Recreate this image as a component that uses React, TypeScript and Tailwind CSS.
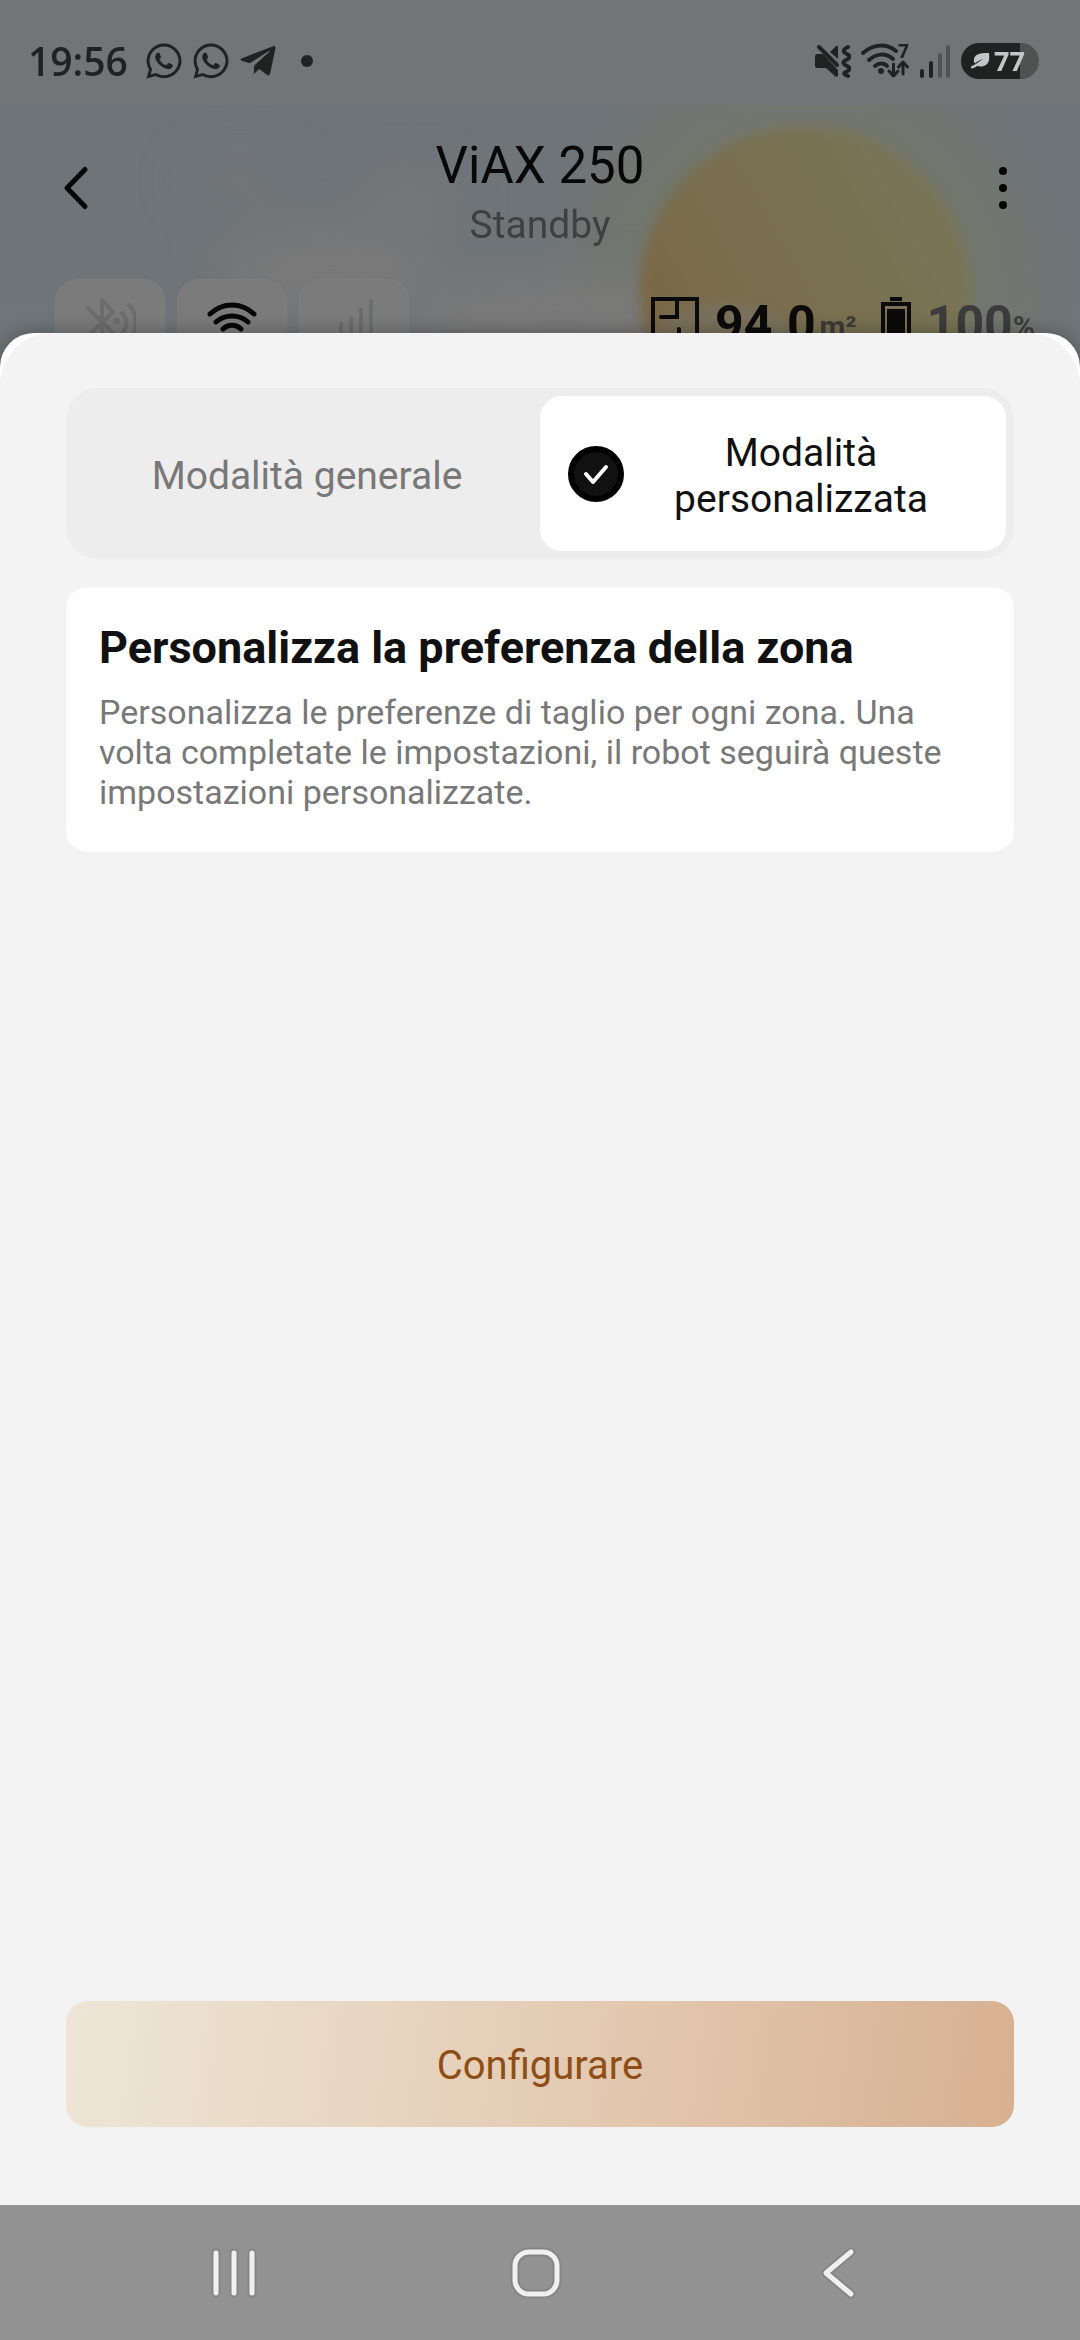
import type { ReactNode } from "react"
import { FaTelegramPlane, FaWhatsapp } from "react-icons/fa"

export default function App() {
  return (
    <div className="flex min-h-screen flex-col bg-[#f3f3f3] font-['Roboto',sans-serif]">
      <header className="relative overflow-hidden bg-[#70757a] pb-2">
        <Sky />
        <div className="relative">
          <StatusBar />
          <AppBar />
          <DeviceStats />
        </div>
      </header>

      <div className="relative -mt-10 flex flex-1 flex-col rounded-t-[34px] bg-white shadow-[0_0_20px_rgba(0,0,0,0.3)]">
        <main className="flex flex-1 flex-col rounded-t-[52px] bg-[#f3f3f3] px-[66px] pt-[55px] pb-[78px]">
          <ModeSwitch />
          <section className="mt-7 rounded-[22px] bg-white px-[33px] pt-[33px] pb-10">
            <h2 className="text-[45px] leading-[56px] font-bold text-[#111]">
              Personalizza la preferenza della zona
            </h2>
            <p className="mt-4 text-[34px] leading-[40px] text-[#787878]">
              Personalizza le preferenze di taglio per ogni zona. Una volta
              completate le impostazioni, il robot seguirà queste impostazioni
              personalizzate.
            </p>
          </section>
          <button
            type="button"
            className="mt-auto h-[126px] rounded-[22px] bg-[linear-gradient(98deg,#ede6d6_0%,#e5cfb8_46%,#d8b091_100%)] pt-1 text-[40px] leading-[46px] text-[#8f4e17]"
          >
            Configurare
          </button>
        </main>
      </div>

      <NavBar />
    </div>
  )
}

/** Dimmed sky with the sun and a few soft clouds */
function Sky() {
  return (
    <svg
      className="absolute inset-0 size-full"
      viewBox="0 0 1080 373"
      preserveAspectRatio="xMidYMin slice"
      aria-hidden="true"
    >
      <defs>
        <linearGradient id="sky" x1="0" y1="0" x2="0" y2="1">
          <stop offset="0" stopColor="#6e7378" />
          <stop offset="1" stopColor="#6f7578" />
        </linearGradient>
        <linearGradient id="sun" x1="0" y1="0.7" x2="0.9" y2="0.2">
          <stop offset="0" stopColor="#7b6643" />
          <stop offset="0.4" stopColor="#796e4d" />
          <stop offset="1" stopColor="#787556" />
        </linearGradient>
        <radialGradient id="halo">
          <stop offset="0.5" stopColor="#747769" />
          <stop offset="1" stopColor="#747769" stopOpacity="0" />
        </radialGradient>
        <filter
          id="soft"
          x="-50%"
          y="-50%"
          width="200%"
          height="200%"
          colorInterpolationFilters="sRGB"
        >
          <feGaussianBlur stdDeviation="24" />
        </filter>
        <filter id="edge" colorInterpolationFilters="sRGB">
          <feGaussianBlur stdDeviation="6" />
        </filter>
      </defs>
      <rect width="1080" height="373" fill="url(#sky)" />
      <circle cx="805" cy="290" r="270" fill="url(#halo)" />
      <g filter="url(#soft)" fill="#7a7979">
        <ellipse cx="330" cy="270" rx="110" ry="40" />
        <ellipse cx="410" cy="200" rx="50" ry="25" opacity="0.7" />
        <ellipse cx="560" cy="320" rx="150" ry="45" />
        <ellipse cx="240" cy="180" rx="60" ry="20" opacity="0.3" />
      </g>
      <circle cx="805" cy="292" r="165" fill="url(#sun)" filter="url(#edge)" />
      <g filter="url(#edge)" fill="#797468">
        <ellipse cx="725" cy="345" rx="75" ry="42" opacity="0.6" />
      </g>
      <rect width="1080" height="105" fill="#737476" />
    </svg>
  )
}

function StatusBar() {
  return (
    <div className="flex h-[106px] items-center pt-4 pr-[41px] pl-7 text-[#202222]">
      <time className="font-['Open_Sans',sans-serif] text-[39px] leading-[46px] font-semibold">
        19:56
      </time>
      <div className="ml-4 flex items-center gap-[7px]">
        <FaWhatsapp className="size-10" />
        <FaWhatsapp className="size-10" />
        <FaTelegramPlane className="size-10" />
        <span className="ml-4 size-3 rounded-full bg-current" />
      </div>
      <div className="ml-auto flex items-center gap-[10px]">
        <MuteIcon />
        <WifiSevenIcon />
        <SignalIcon />
        <div className="flex h-9 w-[78px] items-center justify-center gap-1 rounded-full bg-[linear-gradient(90deg,#202222_76%,#505151_76%)] pr-1 text-[#c4c5c6]">
          <svg width="19" height="16" viewBox="0 0 19 16" fill="currentColor">
            <path d="M18 0C12 0 4 0 3 6c-.4 2 .1 3.500 1 4.500C6 8.500 9 7 12 6 8 8.500 4 12 0 13.500v2C2 15.500 4.500 14.500 6 13c6 1.500 11-.5 12-6 .4-2.500.3-5 0-7Z" />
          </svg>
          <span className="font-['Open_Sans',sans-serif] text-[27px] leading-9 font-bold">
            77
          </span>
        </div>
      </div>
    </div>
  )
}

function AppBar() {
  return (
    <div className="grid h-[164px] grid-cols-[120px_1fr_120px] items-center">
      <button type="button" aria-label="Indietro" className="pl-[60px]">
        <svg width="32" height="48" viewBox="0 0 32 48" fill="none">
          <path
            d="M25 5.500 7 24l18 18.500"
            stroke="#060606"
            strokeWidth="5"
            strokeLinecap="round"
            strokeLinejoin="round"
          />
        </svg>
      </button>
      <div className="flex flex-col items-center gap-[6px] pt-2">
        <h1 className="text-[51px] leading-[60px] text-[#080808]">ViAX 250</h1>
        <p className="text-[39px] leading-[46px] text-[#3e3f40]">Standby</p>
      </div>
      <button
        type="button"
        aria-label="Altro"
        className="flex flex-col items-center gap-[9px] pr-[34px]"
      >
        <span className="size-2 rounded-full bg-black" />
        <span className="size-2 rounded-full bg-black" />
        <span className="size-2 rounded-full bg-black" />
      </button>
    </div>
  )
}

function DeviceStats() {
  return (
    <div className="flex items-center justify-between pt-[9px] pr-[45px] pl-[55px]">
      <div className="flex gap-3">
        <Chip>
          <g stroke="#6c6d6c" strokeWidth="4">
            <path d="m4 12 26 26L18 49V4l11 12L4 40" />
            <path d="M38 17c6 6 6 14 0 20M45 9c9 9 9 25 0 34" />
            <path d="M32 25h1" strokeWidth="6" />
          </g>
        </Chip>
        <Chip>
          <g stroke="#060606" strokeWidth="5">
            <path d="M4 18c13-12 31-12 44 0M10 26c9-8 23-8 32 0M17 33c5-5 13-5 18 0" />
            <path d="M26 40h1" />
          </g>
        </Chip>
        <Chip>
          <g stroke="#6c6d6d" strokeWidth="4">
            <path d="M13 28v20M23 22v26M33 13v35M43 5v43" />
          </g>
        </Chip>
      </div>
      <div className="flex items-center">
        <svg width="48" height="50" viewBox="0 0 48 50" fill="none" stroke="#0b0b0b" strokeWidth="4">
          <path d="M2 2h44v46H2zM26 2v18" />
          <path d="M26 2v18H10M28 44V32" strokeLinecap="round" />
        </svg>
        <Reading value="94.0" className="ml-4 text-[#0b0b0b]">
          <span className="ml-1 text-[#3c3b38]">m²</span>
        </Reading>
        <svg className="ml-6" width="30" height="50" viewBox="0 0 30 50">
          <path d="M9 0h12v4H9z" fill="#0b0b0b" />
          <path d="M2 7h26v41H2z" fill="none" stroke="#0b0b0b" strokeWidth="4" />
          <path d="M6 12h18v32H6z" fill="#0b0b0b" />
        </svg>
        <Reading value="100" className="ml-4 text-[#3c3c3c]">
          <span>%</span>
        </Reading>
      </div>
    </div>
  )
}

/** Large figure with its small, slightly raised unit */
function Reading(props: { value: string; className: string; children: ReactNode }) {
  return (
    <p className={`flex items-end pt-1 font-bold ${props.className}`}>
      <span className="text-[50px] leading-[58px]">{props.value}</span>
      <span className="flex text-[30px] leading-[52px]">{props.children}</span>
    </p>
  )
}

function Chip(props: { children: ReactNode }) {
  return (
    <div className="flex h-[86px] w-[110px] items-center justify-center rounded-[22px] border border-[#7d7e7d] bg-[#7a7b7a]">
      <svg
        width="52"
        height="52"
        viewBox="0 0 52 52"
        fill="none"
        strokeLinecap="round"
        strokeLinejoin="round"
      >
        {props.children}
      </svg>
    </div>
  )
}

function ModeSwitch() {
  return (
    <div className="grid grid-cols-2 rounded-[32px] bg-[#ededed] p-2 text-[39px] leading-[46px]">
      <button
        type="button"
        aria-pressed={false}
        className="rounded-[22px] pt-1 text-[#787878]"
      >
        Modalità generale
      </button>
      <button
        type="button"
        aria-pressed={true}
        className="flex min-h-[155px] items-center rounded-[22px] bg-white px-7 text-[#111]"
      >
        <svg className="shrink-0" width="56" height="56" viewBox="0 0 56 56" fill="none">
          <circle cx="28" cy="28" r="25" fill="#111" stroke="#000" strokeWidth="6" />
          <path
            d="m18 28 7 8 13-15"
            stroke="#fff"
            strokeWidth="4"
            strokeLinecap="round"
            strokeLinejoin="round"
          />
        </svg>
        <span className="flex-1 px-6 pt-1 text-center">Modalità personalizzata</span>
      </button>
    </div>
  )
}

function NavBar() {
  return (
    <nav className="relative grid h-[135px] grid-cols-3 bg-[#929292] pr-[90px] pl-[83px]">
      <NavButton label="Recenti">
        <path d="M8 6v40M26 6v40M44 6v40" />
      </NavButton>
      <NavButton label="Home">
        <rect x="5" y="5" width="42" height="42" rx="14" />
      </NavButton>
      <NavButton label="Indietro">
        <path d="M38 5 13 26l25 21" />
      </NavButton>
    </nav>
  )
}

function NavButton(props: { label: string; children: ReactNode }) {
  return (
    <button
      type="button"
      aria-label={props.label}
      className="flex items-center justify-center"
    >
      <svg
        width="52"
        height="52"
        viewBox="0 0 52 52"
        fill="none"
        strokeLinecap="round"
        strokeLinejoin="round"
      >
        <g stroke="#868686" strokeWidth="9">
          {props.children}
        </g>
        <g stroke="#f0f0f0" strokeWidth="5">
          {props.children}
        </g>
      </svg>
    </button>
  )
}

function MuteIcon() {
  return (
    <svg width="36" height="34" viewBox="0 0 36 34" fill="currentColor">
      <path d="M2 10h6l15 16v6l-2 1-10-9H2q-2 0-2-2v-9q0-3 2-3ZM15 8l6-6q2-1 2 1v12Z" />
      <path
        d="m4 3 18 18M33 3c-6 3-5 5-1 7s3 4-1 6-3 4 1 6 3 4-1 6 0 3 2 4"
        fill="none"
        stroke="currentColor"
        strokeWidth="4"
        strokeLinecap="round"
      />
    </svg>
  )
}

function WifiSevenIcon() {
  return (
    <svg
      width="48"
      height="36"
      viewBox="0 0 48 36"
      fill="none"
      stroke="currentColor"
      strokeLinecap="round"
      strokeLinejoin="round"
      className="overflow-visible"
    >
      <path
        d="M2 10C12 1 25 0 35 8M8 17c8-7 17-7 24-1M14 23c4-3.500 9-3.500 12 0"
        strokeWidth="4"
      />
      <circle cx="20" cy="28" r="3" fill="currentColor" stroke="none" />
      <path d="m28 28 4.500 5 4.500-5M32.500 32V21M37.500 24l4.500-5 4.500 5M42 20v11" strokeWidth="3" />
      <text
        x="37"
        y="15"
        fill="currentColor"
        stroke="none"
        className="font-['Open_Sans',sans-serif] text-[19px] font-bold"
      >
        7
      </text>
    </svg>
  )
}

function SignalIcon() {
  return (
    <svg
      width="32"
      height="36"
      viewBox="0 0 32 36"
      stroke="currentColor"
      strokeWidth="4"
      strokeLinecap="round"
    >
      <path d="M3 28v5M12 20v13" />
      <path d="M21 12v21M29 4v29" stroke="#525354" />
    </svg>
  )
}
